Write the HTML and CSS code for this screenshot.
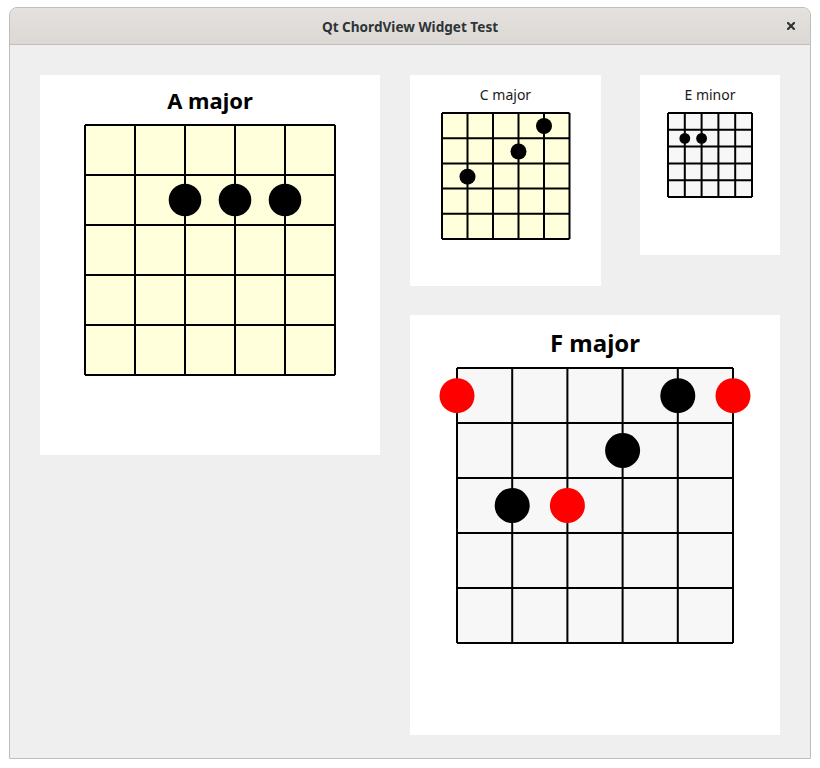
FILE: index.html
```html
<!DOCTYPE html>
<html>
<head>
<meta charset="utf-8">
<link rel="stylesheet" href="styles.css">
</head>
<body>
<div class="window">
  <div class="titlebar">
    <span class="tb-spacer"></span>
    <span class="tb-title">Qt ChordView Widget Test</span>
    <span class="tb-close">
      <svg width="8" height="8" viewBox="0 0 8 8"><path d="M1 1 L7 7 M7 1 L1 7" stroke="#2e3436" stroke-width="2.2" stroke-linecap="square"/></svg>
    </span>
  </div>
  <div class="content">
    <div class="card card-a">
      <div class="title title-big">A major</div>
      <svg class="grid grid-a" width="252" height="252" viewBox="-1 -1 252 252">
        <rect x="0" y="0" width="250" height="250" fill="#ffffdc"/>
        <path d="M0 0V250M50 0V250M100 0V250M150 0V250M200 0V250M250 0V250M0 0H250M0 50H250M0 100H250M0 150H250M0 200H250M0 250H250" stroke="#000" stroke-width="2" fill="none"/>
        <circle cx="100" cy="75" r="16.3"/>
        <circle cx="150" cy="75" r="16.3"/>
        <circle cx="200" cy="75" r="16.3"/>
      </svg>
    </div>
    <div class="right-col">
      <div class="top-row">
        <div class="card card-c">
          <div class="title title-small">C major</div>
          <svg class="grid grid-c" width="130" height="128" viewBox="-1 -1 130 128">
            <rect x="0" y="0" width="127.5" height="126" fill="#ffffdc"/>
            <path d="M0 0V126M25.5 0V126M51 0V126M76.5 0V126M102 0V126M127.5 0V126M0 0H127.5M0 25.2H127.5M0 50.4H127.5M0 75.6H127.5M0 100.8H127.5M0 126H127.5" stroke="#000" stroke-width="2" fill="none"/>
            <circle cx="102" cy="13" r="8"/>
            <circle cx="76.5" cy="38.5" r="8"/>
            <circle cx="25.5" cy="63.7" r="8"/>
          </svg>
        </div>
        <div class="card card-e">
          <div class="title title-small">E minor</div>
          <svg class="grid grid-e" width="86" height="86" viewBox="-1 -1 86 86">
            <rect x="0" y="0" width="84" height="84" fill="#f7f7f7"/>
            <path d="M0 0V84M16.8 0V84M33.6 0V84M50.4 0V84M67.2 0V84M84 0V84M0 0H84M0 16.8H84M0 33.6H84M0 50.4H84M0 67.2H84M0 84H84" stroke="#000" stroke-width="2" fill="none"/>
            <circle cx="16.8" cy="25.4" r="5.4"/>
            <circle cx="33.6" cy="25.4" r="5.4"/>
          </svg>
        </div>
      </div>
      <div class="card card-f">
        <div class="title title-f">F major</div>
        <svg class="grid grid-f" width="278" height="277" viewBox="-1 -1 278 277">
          <rect x="0" y="0" width="276" height="275" fill="#f7f7f7"/>
          <path d="M0 0V275M55.2 0V275M110.4 0V275M165.6 0V275M220.8 0V275M276 0V275M0 0H276M0 55H276M0 110H276M0 165H276M0 220H276M0 275H276" stroke="#000" stroke-width="2" fill="none"/>
          <circle cx="0" cy="27.7" r="17.5" fill="#ff0000"/>
          <circle cx="276" cy="27.7" r="17.5" fill="#ff0000"/>
          <circle cx="220.8" cy="27.7" r="17.5"/>
          <circle cx="165.6" cy="82.5" r="17.5"/>
          <circle cx="55.2" cy="137.5" r="17.5"/>
          <circle cx="110.4" cy="137.5" r="17.5" fill="#ff0000"/>
        </svg>
      </div>
    </div>
  </div>
</div>
</body>
</html>
```

FILE: styles.css
```css
html, body {
  margin: 0;
  padding: 0;
  background: #ffffff;
}

body {
  font-family: "Noto Sans", "DejaVu Sans", sans-serif;
}

.window {
  box-sizing: border-box;
  width: 802px;
  height: 752px;
  margin: 7px 0 0 9px;
  border: 1px solid #bdbdbd;
  border-radius: 8px 8px 0 0;
  background: #efefef;
  display: flex;
  flex-direction: column;
  overflow: hidden;
}

.titlebar {
  box-sizing: border-box;
  height: 37px;
  padding-top: 2px;
  background: linear-gradient(#e4e1de, #dcd8d4);
  border-bottom: 1px solid #c2bdb8;
  display: grid;
  grid-template-columns: 1fr auto 1fr;
  align-items: center;
}

.tb-title {
  font-size: 13.6px;
  font-weight: 700;
  line-height: 34px;
  color: #2e3436;
}

.tb-close {
  justify-self: end;
  margin-right: 15px;
  margin-top: -3px;
  display: flex;
}

.content {
  display: flex;
  gap: 30px;
  padding: 30px 30px 0 30px;
}

.card {
  background: #ffffff;
  display: flex;
  flex-direction: column;
  align-items: center;
  box-sizing: border-box;
}

.card-a {
  width: 340px;
  height: 380px;
  padding-top: 10px;
}

.right-col {
  width: 370px;
  display: flex;
  flex-direction: column;
  gap: 29px;
}

.top-row {
  display: flex;
  justify-content: space-between;
  align-items: flex-start;
}

.card-c {
  width: 191px;
  height: 211px;
  padding-top: 10px;
}

.card-e {
  width: 140px;
  height: 180px;
  padding-top: 10px;
}

.card-f {
  width: 370px;
  height: 420px;
  padding-top: 12px;
}

.title {
  color: #000000;
  white-space: nowrap;
}

.title-big {
  font-size: 22px;
  font-weight: 700;
  line-height: 30px;
  height: 30px;
}

.title-small {
  font-size: 14px;
  font-weight: 400;
  line-height: 20px;
  height: 20px;
  color: #1a1a1a;
}

.title-f {
  font-size: 24px;
  font-weight: 700;
  line-height: 32px;
  height: 32px;
}

.grid {
  display: block;
  overflow: visible;
}

.grid-a {
  margin-top: 9px;
}

.grid-c {
  margin-top: 7px;
}

.grid-e {
  margin-top: 7px;
}

.grid-f {
  margin-top: 8px;
}
```
